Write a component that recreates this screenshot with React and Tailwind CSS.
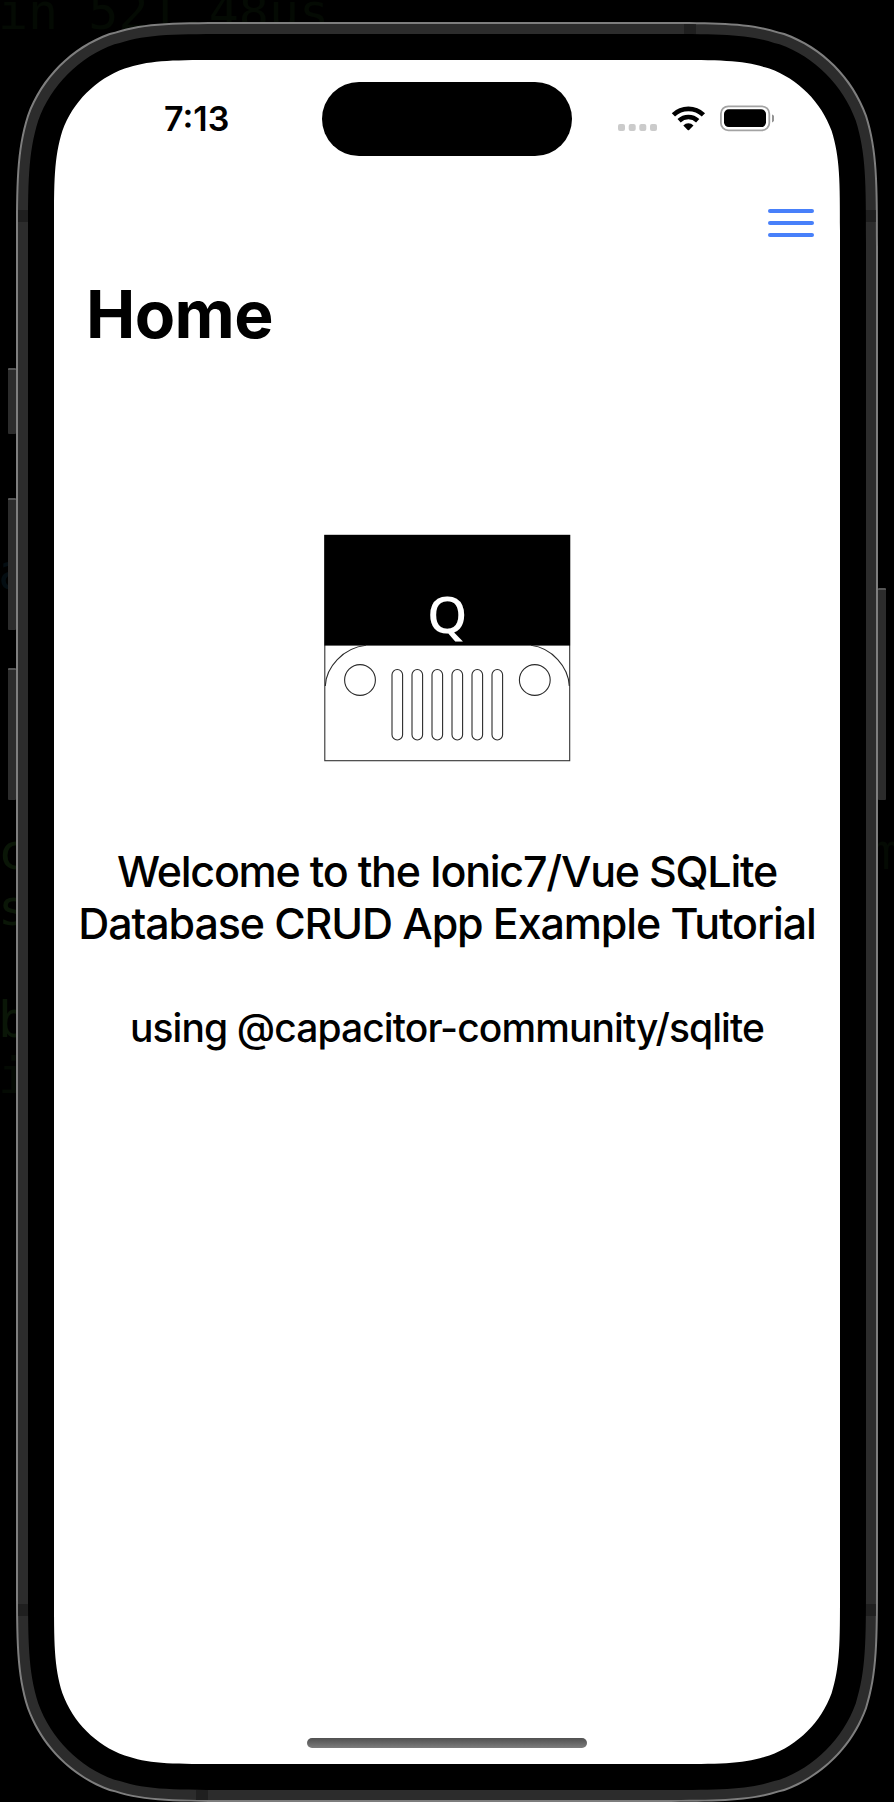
// Continuous-curvature rounded rectangle, used as the clip shape of the device layers.
const CORNER = [
  [1.52866483, 0], [1.08849323, 0], [0.86840689, 0], [0.66993427, 0.065496],
  [0.63149399, 0.074911], [0.37282392, 0.16905899], [0.16906013, 0.37282401],
  [0.07491176, 0.63149399], [0, 0.86840701], [0, 1.08849299], [0, 1.52866483],
];

function squircle(w, h, r) {
  const corner = (right, bottom) =>
    CORNER.map(([x, y]) => {
      const px = right ? w - x * r : x * r;
      const py = bottom ? h - y * r : y * r;
      return px.toFixed(2) + ' ' + py.toFixed(2);
    });
  // Walks a corner from its horizontal edge to its vertical one, mirrored so the path stays clockwise.
  const out = (p) => `L${p[0]}C${p[1]} ${p[2]} ${p[3]}L${p[4]}C${p[5]} ${p[6]} ${p[7]}C${p[8]} ${p[9]} ${p[10]}`;
  const back = (q) => {
    const p = q.slice().reverse();
    return `L${p[0]}C${p[1]} ${p[2]} ${p[3]}C${p[4]} ${p[5]} ${p[6]}L${p[7]}C${p[8]} ${p[9]} ${p[10]}`;
  };
  return `path("M${w / 2} 0${out(corner(true, false))}${back(corner(true, true))}${out(corner(false, true))}${back(corner(false, false))}Z")`;
}

function StatusIcons() {
  return (
    <svg width="160" height="30" viewBox="614 104 160 30" className="block">
      <g fill="#cbcbcb">
        <rect x="618" y="124" width="7" height="7" rx="2" />
        <rect x="628.7" y="124" width="7" height="7" rx="2" />
        <rect x="639.3" y="124" width="7" height="7" rx="2" />
        <rect x="650" y="124" width="7" height="7" rx="2" />
      </g>
      <g fill="none" stroke="#000" strokeWidth="4.7">
        <path d="M673.4 114.9A21.6 21.6 0 0 1 703.4 114.9" />
        <path d="M679.1 120.7A13.6 13.6 0 0 1 697.7 120.7" />
      </g>
      <path d="M683.3 125.4A7.4 7.4 0 0 1 693.5 125.4L689.1 129.9A1 1 0 0 1 687.7 129.9Z" />
      <rect x="720.9" y="106.3" width="48.4" height="24" rx="7.4" fill="none" stroke="#a3a3a3" strokeWidth="1.8" />
      <rect x="724" y="109.3" width="42" height="17.8" rx="4.8" />
      <path d="M772 114.4C775.6 115.6 775.6 121.1 772 122.4Z" fill="#949494" />
    </svg>
  );
}

function JeepLogo() {
  return (
    <svg width="248" height="228" viewBox="323 534 248 228" className="block">
      <rect x="324.8" y="535.3" width="244.9" height="225.4" fill="#fff" stroke="#333" strokeWidth="1.1" />
      <rect x="324.4" y="535" width="245.7" height="110.6" fill="#000" />
      <g fill="none" stroke="#2b2b2b" strokeWidth="1.1">
        <path d="M325.3 686C326 667 343 648 366 645.3" />
        <path d="M569.3 686C568.6 667 552 648 531 645.3" />
        <circle cx="360" cy="680" r="15.4" />
        <circle cx="534.8" cy="680" r="15.4" />
        {[392, 412, 432, 452, 472, 492].map((x) => (
          <rect key={x} x={x} y="669.5" width="10.6" height="70.5" rx="5.3" />
        ))}
      </g>
      <text x="447.3" y="633" textAnchor="middle" fontSize="51" fill="#fff" className="font-['Noto_Sans',sans-serif] font-medium">Q</text>
    </svg>
  );
}

function SideButton({ className }) {
  return <div className={`w-2 shrink-0 rounded-[1px] border-t-2 border-t-[#555] bg-[#2c2c2c] ${className}`} />;
}

// Terminal window showing faintly through behind the device.
function Terminal() {
  return (
    <pre className="absolute inset-0 -z-10 -mt-4 -ml-0.5 overflow-hidden font-['DejaVu_Sans_Mono',monospace] text-[50px] leading-[56px] text-[#040a03]">
      {'in 521.48us' + '\n'.repeat(10)}
      <span className="text-[#040d12]">a</span>
      {'\n'.repeat(5)}
      <span className="text-[#0a1607]">c</span>
      {' '.repeat(28) + 'm\n'}
      <span className="text-[#0a1607]">{'s\n\nb\n'}</span>
      i
    </pre>
  );
}

export default function App() {
  return (
    <div className="relative isolate flex h-[1802px] w-[894px] overflow-hidden bg-black font-['Inter',sans-serif] text-black">
      <Terminal />

      <div className="flex w-4 shrink-0 flex-col items-end pt-[368px]">
        <SideButton className="h-[66px]" />
        <SideButton className="mt-16 h-[132px]" />
        <SideButton className="mt-[38px] h-[132px]" />
      </div>

      <div className="mt-[22px] h-[1780px] w-[862px] shrink-0 bg-[#7e7e7e] p-0.5" style={{ clipPath: squircle(862, 1780, 148) }}>
        <div className="relative h-[1776px] w-[858px] bg-[#2c2c2c] p-2.5" style={{ clipPath: squircle(858, 1776, 146) }}>
          <div className="absolute left-0 top-[186px] h-3 w-full bg-[#1f1f1f]" />
          <div className="absolute left-0 top-[1580px] h-3 w-full bg-[#1f1f1f]" />
          <div className="absolute left-[666px] top-0 h-2.5 w-3 bg-[#1f1f1f]" />
          <div className="absolute bottom-0 left-[178px] h-2.5 w-3 bg-[#1f1f1f]" />
          <div className="relative h-[1756px] w-[838px] bg-black p-[26px]" style={{ clipPath: squircle(838, 1756, 137) }}>
            <main className="flex h-[1704px] w-[786px] flex-col bg-white" style={{ clipPath: squircle(786, 1704, 112) }}>
              <header className="flex h-[119px] shrink-0 pt-[22px]">
                <div className="w-[268px] pl-[110px] pt-[17px] text-[34px] font-semibold leading-[40px]">7:13</div>
                <div className="h-[74px] w-[250px] rounded-full bg-black" />
                <div className="pl-[42px] pt-[22px]"><StatusIcons /></div>
              </header>
              <div className="flex justify-end pr-[25px] pt-[29px]">
                <button className="flex h-[30px] w-[48px] flex-col items-center justify-center gap-[7.7px]" aria-label="Menu">
                  <span className="h-1 w-[46.6px] rounded-full bg-[#4880fa]" />
                  <span className="h-1 w-[46.6px] rounded-full bg-[#4880fa]" />
                  <span className="h-1 w-[46.6px] rounded-full bg-[#4880fa]" />
                </button>
              </div>
              <h1 className="mt-[36px] pl-8 text-[66px] font-bold leading-[80px] tracking-[-0.6px]">Home</h1>
              <div className="mt-[180px] flex justify-center"><JeepLogo /></div>
              <h2 className="mt-[83px] whitespace-nowrap text-center text-[43px] font-medium leading-[52px]">
                <span className="block tracking-[-1.25px]">Welcome to the Ionic7/Vue SQLite</span>
                <span className="block tracking-[-1.13px]">Database CRUD App Example Tutorial</span>
              </h2>
              <p className="mt-[53px] whitespace-nowrap text-center text-[39px] font-medium leading-[52px] tracking-[-0.91px]">using @capacitor-community/sqlite</p>
              <div className="mx-auto mb-4 mt-auto h-2.5 w-[280px] rounded-full bg-linear-to-b from-[#505050] to-[#7d7d7d]" />
            </main>
          </div>
        </div>
      </div>

      <div className="flex w-4 shrink-0 flex-col items-start pt-[588px]">
        <SideButton className="h-[212px]" />
      </div>
    </div>
  );
}
